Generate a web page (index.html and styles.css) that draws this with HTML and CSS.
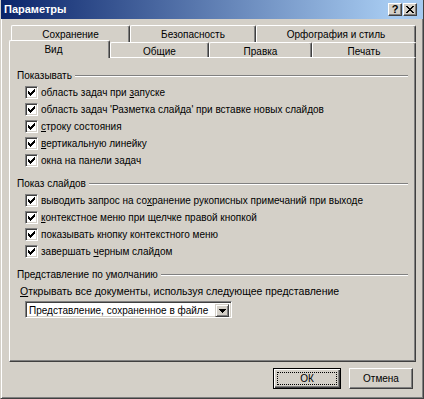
FILE: index.html
```html
<!DOCTYPE html>
<html lang="ru">
<head>
<meta charset="utf-8">
<title>Параметры</title>
<link rel="stylesheet" href="styles.css">
</head>
<body>
<svg class="defs" width="0" height="0" aria-hidden="true">
  <defs>
    <symbol id="chk" viewBox="0 0 11 11">
      <path d="M2 4h1v3h-1zM3 5h1v3h-1zM4 6h1v3h-1zM5 5h1v3h-1zM6 4h1v3h-1zM7 3h1v3h-1zM8 2h1v3h-1z"/>
    </symbol>
  </defs>
</svg>
<div class="window">
  <div class="titlebar">
    <span class="title">Параметры</span>
    <div class="caption-btns">
      <span class="cbtn help">?</span>
      <span class="cbtn close"><svg width="8" height="7" viewBox="0 0 8 7"><path d="M0 0h2v1h-2zM6 0h2v1h-2zM1 1h2v1h-2zM5 1h2v1h-2zM2 2h4v1h-4zM3 3h2v1h-2zM2 4h4v1h-4zM1 5h2v1h-2zM5 5h2v1h-2zM0 6h2v1h-2zM6 6h2v1h-2z"/></svg></span>
    </div>
  </div>
  <div class="main">
    <div class="tabs">
      <div class="tabrow back">
        <div class="tab t-save">Сохранение</div>
        <div class="tab t-sec">Безопасность</div>
        <div class="tab t-spell">Орфография и стиль</div>
      </div>
      <div class="tabrow front">
        <div class="tab t-view selected">Вид</div>
        <div class="tab t-gen">Общие</div>
        <div class="tab t-edit">Правка</div>
        <div class="tab t-print">Печать</div>
      </div>
    </div>
    <div class="panel">
      <div class="group">
        <div class="legend"><span>Показывать</span><span class="line"></span></div>
        <div class="rows">
          <div class="row"><span class="cb"><svg><use href="#chk"/></svg></span><span>область задач при <u>з</u>апуске</span></div>
          <div class="row"><span class="cb"><svg><use href="#chk"/></svg></span><span>область задач 'Разметка слайда' при вставке новых слайдов</span></div>
          <div class="row"><span class="cb"><svg><use href="#chk"/></svg></span><span><u>с</u>троку состояния</span></div>
          <div class="row"><span class="cb"><svg><use href="#chk"/></svg></span><span><u>в</u>ертикальную линейку</span></div>
          <div class="row"><span class="cb"><svg><use href="#chk"/></svg></span><span>окна на панели за<u>д</u>ач</span></div>
        </div>
      </div>
      <div class="group">
        <div class="legend"><span>Показ слайдов</span><span class="line"></span></div>
        <div class="rows">
          <div class="row"><span class="cb"><svg><use href="#chk"/></svg></span><span>выводить запрос на со<u>х</u>ранение рукописных примечаний при выходе</span></div>
          <div class="row"><span class="cb"><svg><use href="#chk"/></svg></span><span><u>к</u>онтекстное меню при щелчке правой кнопкой</span></div>
          <div class="row"><span class="cb"><svg><use href="#chk"/></svg></span><span>показывать кнопку контекстного меню</span></div>
          <div class="row"><span class="cb"><svg><use href="#chk"/></svg></span><span>завершать <u>ч</u>ерным слайдом</span></div>
        </div>
      </div>
      <div class="group">
        <div class="legend"><span>Представление по умолчанию</span><span class="line"></span></div>
        <div class="open-row"><u>О</u>ткрывать все документы, используя следующее представление</div>
        <div class="combo">
          <span class="combo-text">Представление, сохраненное в файле</span>
          <span class="combo-btn"><svg width="7" height="4" viewBox="0 0 7 4"><path d="M0 0h7v1h-7zM1 1h5v1h-5zM2 2h3v1h-3zM3 3h1v1h-1z"/></svg></span>
        </div>
      </div>
    </div>
    <div class="buttons">
      <button class="btn ok"><span class="focus">ОК</span></button>
      <button class="btn cancel"><span class="inner">Отмена</span></button>
    </div>
  </div>
</div>
</body>
</html>
```
FILE: styles.css
```css
* { box-sizing: border-box; }
html, body { margin: 0; padding: 0; }
body {
  width: 424px;
  height: 399px;
  overflow: hidden;
  background: #d4d0c8;
  font-family: "Liberation Sans", Arial, sans-serif;
  font-size: 10px;
  color: #000;
}
.defs { display: block; width: 0; height: 0; overflow: hidden; }

.window {
  width: 424px;
  height: 399px;
  background: #d4d0c8;
  border-left: 1px solid #d4d0c8;
  border-right: 1px solid #404040;
  border-bottom: 1px solid #404040;
  box-shadow: inset 1px 0 #fff, inset -1px -1px #808080;
  display: flex;
  flex-direction: column;
}

.titlebar {
  height: 19px;
  flex: none;
  display: flex;
  align-items: flex-start;
  padding-left: 3px;
  background: linear-gradient(to right, #0a246a 0%, #a6caf0 92%, #a6caf0 100%);
}
.title {
  flex: 1;
  color: #fff;
  font-weight: bold;
  font-size: 11px;
  line-height: 19px;
}
.caption-btns {
  display: flex;
  gap: 1px;
  margin-top: 3px;
  margin-right: 6px;
}
.cbtn {
  width: 14px;
  height: 13px;
  background: #d4d0c8;
  border: 1px solid;
  border-color: #fff #404040 #404040 #fff;
  box-shadow: inset -1px -1px #808080;
  display: flex;
  align-items: center;
  justify-content: center;
  font-weight: bold;
  font-size: 11px;
  line-height: 11px;
}
.cbtn svg { display: block; fill: #000; }

.main {
  flex: 1;
  display: flex;
  flex-direction: column;
  padding: 6px 7px 0 8px;
}

.tabs { width: 407px; }
.tabrow { display: flex; }
.tabrow.back { height: 17px; padding-left: 2px; }
.tabrow.front { height: 17px; margin-top: -2px; }

.tab {
  background: #d4d0c8;
  border-top: 1px solid #fff;
  border-left: 1px solid #fff;
  border-right: 1px solid #404040;
  box-shadow: inset -1px 0 #808080;
  border-radius: 2px 2px 0 0;
  display: flex;
  justify-content: center;
  align-items: flex-start;
  line-height: 13px;
  white-space: nowrap;
}
.back .tab { height: 17px; padding-top: 2px; }
.front .tab { height: 15px; margin-top: 2px; padding-top: 2px; }
.front .tab.selected {
  position: relative;
  z-index: 1;
  height: 18px;
  margin-top: 0;
  padding-right: 12px;
}

.t-save { width: 119px; }
.t-sec { width: 126px; }
.t-spell { width: 160px; }
.t-view { width: 101px; }
.t-gen { width: 99px; }
.t-edit { width: 103px; }
.t-print { width: 104px; }

.panel {
  width: 407px;
  height: 305px;
  border: 1px solid;
  border-color: #fff #404040 #404040 #fff;
  box-shadow: inset -1px -1px #808080;
  padding: 11px 7px 0 7px;
}

.group { margin-bottom: 8px; }
.legend {
  display: flex;
  align-items: center;
  height: 13px;
  line-height: 13px;
  white-space: nowrap;
}
.legend .line {
  flex: 1;
  height: 2px;
  margin-left: 3px;
  border-top: 1px solid #808080;
  border-bottom: 1px solid #fff;
}

.rows { margin-top: 2px; padding-left: 8px; }
.row {
  display: flex;
  align-items: center;
  height: 17px;
  white-space: nowrap;
}
.cb {
  flex: none;
  width: 13px;
  height: 13px;
  margin-right: 3px;
  background: #fff;
  border: 1px solid;
  border-color: #808080 #fff #fff #808080;
  box-shadow: inset 1px 1px #404040, inset -1px -1px #d4d0c8;
}
.cb svg { display: block; width: 11px; height: 11px; fill: #000; }

.open-row {
  margin-top: 2px;
  height: 17px;
  line-height: 17px;
  padding-left: 3px;
  font-size: 10.5px;
  white-space: nowrap;
}
.combo {
  margin-top: 1px;
  margin-left: 8px;
  width: 207px;
  height: 17px;
  display: flex;
  padding: 2px;
  background: #fff;
  border: 1px solid;
  border-color: #808080 #fff #fff #808080;
  box-shadow: inset 1px 1px #404040, inset -1px -1px #d4d0c8;
}
.combo-text {
  flex: 1;
  line-height: 13px;
  padding-left: 1px;
  white-space: nowrap;
}
.combo-btn {
  width: 14px;
  height: 13px;
  background: #d4d0c8;
  border: 1px solid;
  border-color: #d4d0c8 #404040 #404040 #d4d0c8;
  box-shadow: inset 1px 1px #fff, inset -1px -1px #808080;
  display: flex;
  align-items: center;
  justify-content: center;
}
.combo-btn svg { display: block; fill: #000; }

.buttons {
  display: flex;
  justify-content: flex-end;
  gap: 8px;
  margin-top: 6px;
  padding-right: 3px;
}
.btn {
  margin: 0;
  height: 21px;
  background: #d4d0c8;
  font-family: inherit;
  font-size: 10px;
  color: #000;
  display: flex;
  align-items: stretch;
}
.btn.ok {
  width: 68px;
  padding: 3px;
  border: 1px solid #000;
  box-shadow: inset 1px 1px #fff, inset -1px -1px #404040, inset -2px -2px #808080;
}
.btn.cancel {
  width: 64px;
  padding: 0;
  border: 1px solid;
  border-color: #fff #404040 #404040 #fff;
  box-shadow: inset -1px -1px #808080;
}
.focus {
  flex: 1;
  border: 1px dotted #000;
  display: flex;
  align-items: center;
  justify-content: center;
}
.inner {
  flex: 1;
  display: flex;
  align-items: center;
  justify-content: center;
}
```
